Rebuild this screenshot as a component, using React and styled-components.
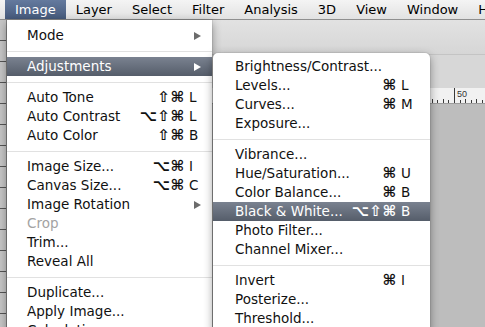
import React from 'react';
import styled, { createGlobalStyle } from 'styled-components';

const GlobalStyle = createGlobalStyle`
  html, body {
    margin: 0;
    padding: 0;
  }
  body {
    width: 485px;
    height: 327px;
    overflow: hidden;
    font-family: "DejaVu Sans", "Liberation Sans", sans-serif;
  }
`;

const Screen = styled.div`
  position: relative;
  width: 485px;
  height: 327px;
  display: flex;
  flex-direction: column;
  overflow: hidden;
  background: #bfbfbf;
`;

const MenuBar = styled.div`
  box-sizing: border-box;
  height: 20px;
  display: flex;
  padding-left: 5px;
  background: linear-gradient(#f4f4f4, #e2e2e2);
  border-bottom: 1px solid #8f8f8f;
  font-size: 13px;
`;

const MenuTitle = styled.div`
  padding: 0 10px;
  line-height: 19px;
  white-space: nowrap;
  color: ${p => (p.$active ? '#fff' : '#000')};
  background: ${p => (p.$active ? 'linear-gradient(#647a9e, #465a7c)' : 'transparent')};
`;

const Workspace = styled.div`
  flex: 1;
  display: flex;
  min-height: 0;
`;

const ToolStrip = styled.div`
  width: 7px;
  background: repeating-linear-gradient(to bottom, #c6c6c6 0 20px, #555 20px 21px);
  border-right: 1px solid #8a8a8a;
`;

const Main = styled.div`
  flex: 1;
  display: flex;
  flex-direction: column;
`;

const OptionsBar = styled.div`
  height: 34px;
  background: linear-gradient(#e2e2e2, #d6d6d6);
  border-bottom: 1px solid #c4c4c4;
`;

const TabBar = styled.div`
  height: 33px;
  background: #d7d7d7;
`;

const Ruler = styled.div`
  position: relative;
  height: 15px;
  background: #f1f1f1;
  border-bottom: 1px solid #9c9c9c;

  svg {
    display: block;
  }
`;

const RulerLabel = styled.span`
  position: absolute;
  left: 450px;
  top: 1px;
  font-family: "Liberation Sans", Arial, sans-serif;
  font-size: 9px;
  line-height: 10px;
  color: #333;
`;

const Canvas = styled.div`
  flex: 1;
  background: #bdbdbd;
`;

const Menu = styled.div`
  position: absolute;
  left: ${p => p.$left}px;
  top: ${p => p.$top}px;
  width: ${p => p.$width}px;
  padding: ${p => p.$padTop}px 0 6px;
  background: #fff;
  border-radius: ${p => (p.$sub ? '5px' : '0 0 5px 5px')};
  box-shadow: 0 3px 10px rgba(0, 0, 0, 0.4), 0 0 0 1px rgba(0, 0, 0, 0.06);
  font-size: 13.5px;
  color: #111;
`;

const Row = styled.div`
  display: grid;
  grid-template-columns: 1fr auto 14px;
  align-items: center;
  height: 19px;
  line-height: 19px;
  padding: 0 ${p => p.$padRight}px 0 ${p => p.$padLeft}px;
  white-space: nowrap;
  color: ${p => (p.$active ? '#fff' : p.$disabled ? '#a3a3a3' : '#111')};
  background: ${p => (p.$active ? 'linear-gradient(#7a8290, #555d6a)' : 'transparent')};
`;

const Mods = styled.span`
  margin-right: 4px;
  font-size: 15px;
  font-weight: bold;
  letter-spacing: 0.5px;
  text-align: right;
`;

const Key = styled.span`
  text-align: left;
`;

const Arrow = styled.span`
  justify-self: start;
  margin-left: 5px;
  width: 0;
  height: 0;
  border-top: 4.5px solid transparent;
  border-bottom: 4.5px solid transparent;
  border-left: 7px solid ${p => (p.$active ? '#fff' : '#6c6c6c')};
`;

const Separator = styled.div`
  height: 12px;
  display: flex;
  align-items: center;

  &::after {
    content: '';
    flex: 1;
    border-top: 1px solid #e1e1e1;
  }
`;

const titles = ['Image', 'Layer', 'Select', 'Filter', 'Analysis', '3D', 'View', 'Window', 'Help'];

const imageMenu = [
  { label: 'Mode', sub: true },
  'sep',
  { label: 'Adjustments', sub: true, active: true },
  'sep',
  { label: 'Auto Tone', mods: '⇧⌘', key: 'L' },
  { label: 'Auto Contrast', mods: '⌥⇧⌘', key: 'L' },
  { label: 'Auto Color', mods: '⇧⌘', key: 'B' },
  'sep',
  { label: 'Image Size...', mods: '⌥⌘', key: 'I' },
  { label: 'Canvas Size...', mods: '⌥⌘', key: 'C' },
  { label: 'Image Rotation', sub: true },
  { label: 'Crop', disabled: true },
  { label: 'Trim...' },
  { label: 'Reveal All' },
  'sep',
  { label: 'Duplicate...' },
  { label: 'Apply Image...' },
  { label: 'Calculations...' },
];

const adjustMenu = [
  { label: 'Brightness/Contrast...' },
  { label: 'Levels...', mods: '⌘', key: 'L' },
  { label: 'Curves...', mods: '⌘', key: 'M' },
  { label: 'Exposure...' },
  'sep',
  { label: 'Vibrance...' },
  { label: 'Hue/Saturation...', mods: '⌘', key: 'U' },
  { label: 'Color Balance...', mods: '⌘', key: 'B' },
  { label: 'Black & White...', mods: '⌥⇧⌘', key: 'B', active: true },
  { label: 'Photo Filter...' },
  { label: 'Channel Mixer...' },
  'sep',
  { label: 'Invert', mods: '⌘', key: 'I' },
  { label: 'Posterize...' },
  { label: 'Threshold...' },
];

function MenuItems({ items, padLeft, padRight }) {
  return items.map((item, i) =>
    item === 'sep' ? (
      <Separator key={i} />
    ) : (
      <Row
        key={i}
        $active={item.active}
        $disabled={item.disabled}
        $padLeft={padLeft}
        $padRight={padRight}
      >
        <span>{item.label}</span>
        <Mods>{item.mods}</Mods>
        {item.sub ? <Arrow $active={item.active} /> : <Key>{item.key}</Key>}
      </Row>
    )
  );
}

function RulerTicks() {
  const ticks = [];
  for (let n = -80; n <= 8; n++) {
    const x = 447 + n * 5.56;
    if (x < 0) continue;
    const h = n === 0 ? 15 : n % 2 === 0 ? 4 : 3;
    ticks.push(<rect key={n} x={Math.round(x)} y={15 - h} width="1" height={h} fill="#3a3a3a" />);
  }
  return (
    <svg width="478" height="15">
      {ticks}
    </svg>
  );
}

export default function App() {
  return (
    <>
      <GlobalStyle />
      <Screen>
        <MenuBar>
          {titles.map(t => (
            <MenuTitle key={t} $active={t === 'Image'}>{t}</MenuTitle>
          ))}
        </MenuBar>
        <Workspace>
          <ToolStrip />
          <Main>
            <OptionsBar />
            <TabBar />
            <Ruler>
              <RulerTicks />
              <RulerLabel>50</RulerLabel>
            </Ruler>
            <Canvas />
          </Main>
        </Workspace>

        <Menu $left={7} $top={20} $width={205} $padTop={6}>
          <MenuItems items={imageMenu} padLeft={20} padRight={9} />
        </Menu>
        <Menu $sub $left={213} $top={53} $width={217} $padTop={4}>
          <MenuItems items={adjustMenu} padLeft={22} padRight={15} />
        </Menu>
      </Screen>
    </>
  );
}
